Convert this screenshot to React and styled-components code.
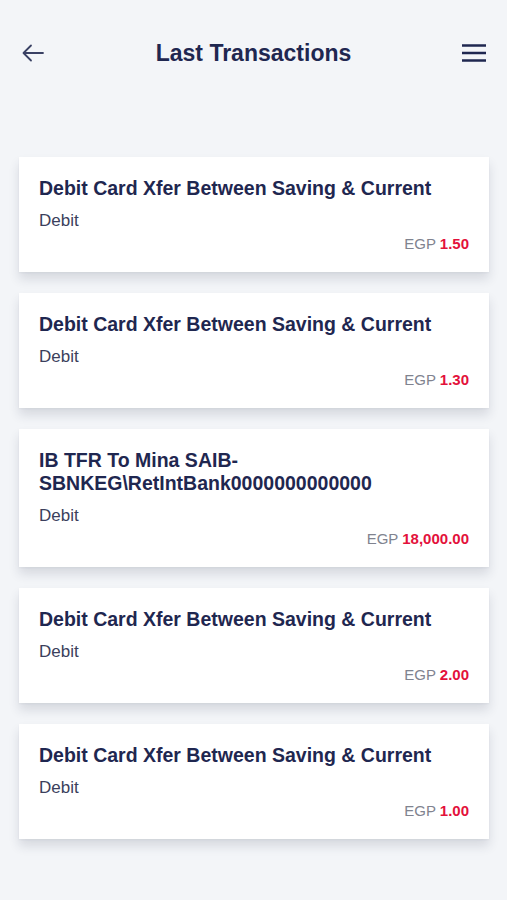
import React from "react"
import styled, { createGlobalStyle } from "styled-components"

const GlobalStyle = createGlobalStyle`
  html, body {
    margin: 0;
    padding: 0;
    background: #f3f5f8;
    font-family: "Liberation Sans", Arial, sans-serif;
  }
`

const transactions = [
  { title: ["Debit Card Xfer Between Saving & Current"], type: "Debit", amount: "1.50" },
  { title: ["Debit Card Xfer Between Saving & Current"], type: "Debit", amount: "1.30" },
  { title: ["IB TFR To Mina SAIB-", "SBNKEG\\RetIntBank0000000000000"], type: "Debit", amount: "18,000.00" },
  { title: ["Debit Card Xfer Between Saving & Current"], type: "Debit", amount: "2.00" },
  { title: ["Debit Card Xfer Between Saving & Current"], type: "Debit", amount: "1.00" },
]

const Page = styled.div`
  width: 507px;
  min-height: 900px;
  background: #f3f5f8;
  box-sizing: border-box;
`

const Header = styled.header`
  display: flex;
  align-items: center;
  justify-content: space-between;
  height: 40px;
  padding: 33px 20px 0 20px;
`

const IconButton = styled.button`
  border: 0;
  background: none;
  padding: 0;
  width: 26px;
  height: 26px;
  display: flex;
  align-items: center;
  justify-content: center;
  color: ${props => props.$muted ? "#3a4164" : "#1f2750"};
`

const Title = styled.h1`
  margin: 0;
  font-size: 23px;
  font-weight: 700;
  color: #1f2750;
`

const List = styled.div`
  display: flex;
  flex-direction: column;
  gap: 21px;
  padding: 84px 18px 40px 19px;
`

const Card = styled.div`
  background: #fff;
  padding: 20px 20px 19px;
  box-shadow: 0 7px 10px rgba(40, 50, 80, 0.14), 0 1px 2px rgba(40, 50, 80, 0.05);
`

const CardTitle = styled.div`
  font-size: 19.5px;
  line-height: 23px;
  font-weight: 700;
  color: #1f2750;
`

const Type = styled.div`
  margin-top: 11px;
  font-size: 17px;
  line-height: 20px;
  color: #3b3f5c;
`

const Amount = styled.div`
  margin-top: 4px;
  text-align: right;
  font-size: 15px;
  line-height: 18px;
  color: #80838f;
  b {
    color: #e3113b;
    font-weight: 700;
  }
`

const BackIcon = () => (
  <svg width="24" height="24" viewBox="0 0 24 24" fill="none" stroke="currentColor" strokeWidth="1.8" strokeLinecap="round" strokeLinejoin="round">
    <path d="M22 12H3M10 4.5L2.5 12l7.5 7.5" />
  </svg>
)

const MenuIcon = () => (
  <svg width="26" height="24" viewBox="0 0 26 24" fill="none" stroke="currentColor" strokeWidth="2.4">
    <path d="M1 4.5h24M1 12h24M1 19.5h24" />
  </svg>
)

export default function App() {
  return (
    <Page>
      <GlobalStyle />
      <Header>
        <IconButton $muted aria-label="Back"><BackIcon /></IconButton>
        <Title>Last Transactions</Title>
        <IconButton aria-label="Menu"><MenuIcon /></IconButton>
      </Header>
      <List>
        {transactions.map((t, i) => (
          <Card key={i}>
            <CardTitle>
              {t.title.map((line, j) => <div key={j}>{line}</div>)}
            </CardTitle>
            <Type>{t.type}</Type>
            <Amount>EGP <b>{t.amount}</b></Amount>
          </Card>
        ))}
      </List>
    </Page>
  )
}
